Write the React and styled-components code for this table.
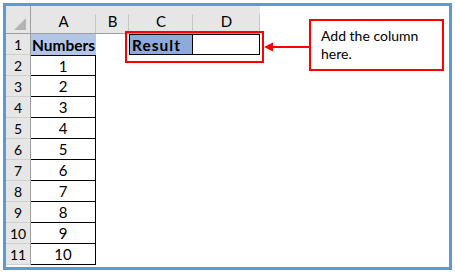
import styled, { createGlobalStyle } from "styled-components";

const GlobalStyle = createGlobalStyle`
    html, body {
        margin: 0;
        padding: 0;
        background: #fff;
    }
    body {
        font-family: Lato, "Liberation Sans", sans-serif;
        color: #000;
    }
`;

const Page = styled.div`
    padding: 3px;
`;

const Frame = styled.div`
    position: relative;
    width: 443px;
    height: 261px;
    border: 3px solid #5b9bd5;
    overflow: hidden;
`;

const Sheet = styled.div`
    display: grid;
    grid-template-columns: 25px 65px 33px 64px 67px;
    grid-template-rows: 28px repeat(11, 21px);
    width: 254px;
`;

const Corner = styled.div`
    position: relative;
    background: #e6e6e6;
    border-right: 1px solid #9f9f9f;
    border-bottom: 1px solid #9f9f9f;
    box-sizing: border-box;
`;

const SelectAll = styled.div`
    position: absolute;
    right: 4px;
    bottom: 3px;
    width: 12px;
    height: 12px;
    background: #b4b4b4;
    clip-path: polygon(100% 0, 100% 100%, 0 100%);
`;

const ColHead = styled.div`
    background: #e6e6e6;
    border-bottom: 1px solid #9f9f9f;
    box-sizing: border-box;
    display: flex;
    align-items: center;
    justify-content: center;
    font-size: 15px;
    padding-top: 2px;
    position: relative;
    &::after {
        content: "";
        position: absolute;
        right: 0;
        top: 8px;
        bottom: 0;
        width: 1px;
        background: #c6c6c6;
    }
`;

const RowHead = styled.div`
    background: #e6e6e6;
    border-right: 1px solid #9f9f9f;
    border-bottom: 1px solid #d0d0d0;
    box-sizing: border-box;
    display: flex;
    align-items: center;
    justify-content: center;
    font-size: 14px;
`;

const Cell = styled.div`
    box-sizing: border-box;
    display: flex;
    align-items: center;
    justify-content: ${(p) => (p.$left ? "flex-start" : "center")};
    padding-left: ${(p) => (p.$left ? "2px" : "0")};
    font-size: ${(p) => (p.$bold ? "15.5px" : "15px")};
    font-weight: ${(p) => (p.$bold ? 700 : 400)};
    letter-spacing: ${(p) => p.$spacing || "0"};
    background: ${(p) => p.$fill || "#fff"};
    border-right: ${(p) => (p.$boxed ? "1px solid #000" : "none")};
    border-bottom: ${(p) => (p.$boxed ? "1px solid #000" : "none")};
    border-left: ${(p) => (p.$boxLeft ? "1px solid #000" : "none")};
    border-top: ${(p) => (p.$boxTop ? "1px solid #000" : "none")};
`;

const Highlight = styled.div`
    position: absolute;
    left: 119px;
    top: 25px;
    width: 135px;
    height: 28px;
    border: 2px solid #ff0000;
`;

const Callout = styled.div`
    position: absolute;
    left: 303px;
    top: 13px;
    width: 121px;
    height: 38px;
    border: 2px solid #ff0000;
    padding: 6px 0 4px 10px;
    font-size: 14px;
    line-height: 18px;
    background: #fff;
`;

const Arrow = styled.svg`
    position: absolute;
    left: 258px;
    top: 33px;
`;

const numbers = [1, 2, 3, 4, 5, 6, 7, 8, 9, 10];

export default function App() {
    return (
        <>
            <GlobalStyle />
            <Page>
                <Frame>
                    <Sheet>
                        <Corner>
                            <SelectAll />
                        </Corner>
                        {["A", "B", "C", "D"].map((c) => (
                            <ColHead key={c}>{c}</ColHead>
                        ))}

                        <RowHead>1</RowHead>
                        <Cell $bold $fill="#b4c6e7">
                            Numbers
                        </Cell>
                        <Cell />
                        <Cell $bold $left $spacing="1px" $fill="#8eaadb" $boxed $boxLeft $boxTop>
                            Result
                        </Cell>
                        <Cell $boxed $boxTop />

                        {numbers.map((n) => (
                            <Row key={n} n={n} />
                        ))}
                    </Sheet>

                    <Highlight />
                    <Arrow width="48" height="16" viewBox="0 0 48 16">
                        <line x1="8" y1="8" x2="48" y2="8" stroke="#ff0000" strokeWidth="2" />
                        <polygon points="0,8 9,3.5 9,12.5" fill="#ff0000" />
                    </Arrow>
                    <Callout>
                        Add the column
                        <br />
                        here.
                    </Callout>
                </Frame>
            </Page>
        </>
    );
}

function Row({ n }) {
    return (
        <>
            <RowHead>{n + 1}</RowHead>
            <Cell $boxed $boxTop={n === 1}>
                {n}
            </Cell>
            <Cell />
            <Cell />
            <Cell />
        </>
    );
}
